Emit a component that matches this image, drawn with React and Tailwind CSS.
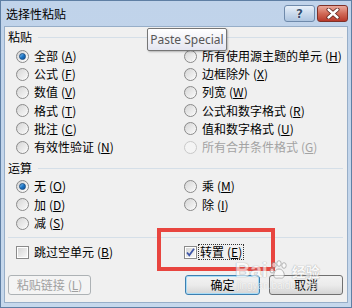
import React from "react";

function Radio({ checked, disabled }) {
  return (
    <div
      className={
        "w-[13px] h-[13px] shrink-0 rounded-full border flex items-center justify-center " +
        (disabled
          ? "border-[#c9c9c9] bg-[#f4f4f4]"
          : "border-[#8a8a8a] bg-linear-to-br from-[#cfcfcf] via-[#ececec] to-[#ffffff]")
      }
    >
      {checked ? (
        <div className="w-[7px] h-[7px] rounded-full bg-linear-to-br from-[#7ec3f2] via-[#1f78c8] to-[#0b4d95] border border-[#1a4f86]" />
      ) : (
        <div
          className={
            "w-[9px] h-[9px] rounded-full " +
            (disabled ? "bg-[#f4f4f4]" : "bg-linear-to-br from-[#d9d9d9] to-[#f7f7f7]")
          }
        />
      )}
    </div>
  );
}

function Check({ checked }) {
  return (
    <div className="w-[13px] h-[13px] shrink-0 border border-[#8a8a8a] bg-white p-[1px]">
      <div className="w-full h-full bg-linear-to-br from-[#d6d6d6] to-[#f8f8f8] relative">
        {checked && (
          <svg width="11" height="11" viewBox="0 0 11 11" className="absolute -left-[1px] -top-[1px]">
            <path d="M2 5.5 L4.3 8.3 L9 1.8" fill="none" stroke="#3f56a8" strokeWidth="1.8" />
          </svg>
        )}
      </div>
    </div>
  );
}

function Acc({ c }) {
  return (
    <span className="ml-[3px]">
      (<span className="underline">{c}</span>)
    </span>
  );
}

function Opt({ label, acc, checked, disabled, h = "h-[18.2px]" }) {
  return (
    <div className={"flex items-center " + h}>
      <Radio checked={checked} disabled={disabled} />
      <span className={"ml-[5px] whitespace-nowrap " + (disabled ? "text-[#a3a3a3]" : "text-black")}>
        {label}
        <Acc c={acc} />
      </span>
    </div>
  );
}

function Header({ label, className = "" }) {
  return (
    <div className={"flex items-center h-[18px] pl-[3px] pr-[4px] " + className}>
      <span className="whitespace-nowrap">{label}</span>
      <div className="flex-1 ml-[6px] h-px bg-[#d5dfe8]" />
    </div>
  );
}

export default function App() {
  return (
    <div className="w-[352px] h-[308px] bg-white">
      <div className="relative w-[352px] h-[308px] flex flex-col border border-[#5f7fa4] bg-linear-to-b from-[#c0d3ea] to-[#c6d8ec] font-['Noto_Sans_CJK_SC',sans-serif] text-[12px] leading-[18px]">
        {/* title bar */}
        <div className="h-[25px] flex items-center pl-[5px] pr-[3px] shrink-0">
          <span className="text-black text-[12px]">选择性粘贴</span>
          <div className="flex-1" />
          <div className="flex gap-[2px] items-start h-[25px] pt-[4px]">
            <div className="w-[31px] h-[17px] rounded-[3px] border border-[#6f8aab] bg-linear-to-b from-[#e9f1fa] via-[#c9d9ec] to-[#aec5e0] flex items-center justify-center">
              <span className="font-['DejaVu_Sans',sans-serif] font-bold text-[12px] leading-none text-[#34506f] [text-shadow:0_0_1px_#fff,0_0_1px_#fff]">?</span>
            </div>
            <div className="w-[31px] h-[17px] rounded-[3px] border border-[#7f3128] bg-linear-to-b from-[#e9a99c] via-[#d16a57] to-[#b8382a] flex items-center justify-center">
              <svg width="14" height="11" viewBox="0 0 14 11">
                <path d="M2.5 1.5 L11.5 9.5 M11.5 1.5 L2.5 9.5" stroke="#5a1e18" strokeWidth="4" strokeLinecap="round" />
                <path d="M2.5 1.5 L11.5 9.5 M11.5 1.5 L2.5 9.5" stroke="#ffffff" strokeWidth="2.4" strokeLinecap="round" />
              </svg>
            </div>
          </div>
        </div>

        {/* content */}
        <div className="flex-1 mx-[3px] mb-[4px] border border-[#97aec8] bg-[#f0f0f0] flex flex-col">
          <Header label="粘贴" className="mt-[1px]" />
          <div className="grid grid-cols-[168px_1fr] pl-[11px] mt-px">
            <div className="flex flex-col">
              <Opt label="全部" acc="A" checked />
              <Opt label="公式" acc="F" />
              <Opt label="数值" acc="V" />
              <Opt label="格式" acc="T" />
              <Opt label="批注" acc="C" />
              <Opt label="有效性验证" acc="N" />
            </div>
            <div className="flex flex-col">
              <Opt label="所有使用源主题的单元" acc="H" />
              <Opt label="边框除外" acc="X" />
              <Opt label="列宽" acc="W" />
              <Opt label="公式和数字格式" acc="R" />
              <Opt label="值和数字格式" acc="U" />
              <Opt label="所有合并条件格式" acc="G" disabled />
            </div>
          </div>

          <Header label="运算" className="mt-[3px]" />
          <div className="grid grid-cols-[168px_1fr] pl-[11px]">
            <div className="flex flex-col">
              <Opt label="无" acc="O" checked h="h-[18.4px]" />
              <Opt label="加" acc="D" h="h-[18.4px]" />
              <Opt label="减" acc="S" h="h-[18.4px]" />
            </div>
            <div className="flex flex-col">
              <Opt label="乘" acc="M" h="h-[18.4px]" />
              <Opt label="除" acc="I" h="h-[18.4px]" />
            </div>
          </div>

          <div className="mt-[5px] ml-[3px] mr-[4px] h-px bg-[#d5dfe8]" />

          <div className="grid grid-cols-[168px_1fr] pl-[11px] mt-[5px] h-[18px]">
            <div className="flex items-center">
              <Check />
              <span className="ml-[5px] whitespace-nowrap">
                跳过空单元
                <Acc c="B" />
              </span>
            </div>
            <div className="flex items-center">
              <Check checked />
              <span className="ml-[1px] whitespace-nowrap border border-dotted border-[#333] px-[1px] leading-[14px]">
                转置
                <Acc c="E" />
              </span>
            </div>
          </div>

          <div className="flex items-start mt-[14px] pl-[3px] pr-[4px]">
            <div className="w-[83px] h-[20px] rounded-[3px] border border-[#adb2b5] bg-[#f4f4f4] flex items-center justify-center text-[#a0a0a0]">
              粘贴链接
              <Acc c="L" />
            </div>
            <div className="flex-1" />
            <div className="w-[75px] h-[20px] rounded-[3px] border border-[#3c7fb1] bg-linear-to-b from-[#f2f2f2] via-[#ebebeb] to-[#d5d5d5] shadow-[inset_0_0_0_1px_#a9dcf6] flex items-center justify-center text-black">
              确定
            </div>
            <div className="w-[74px] h-[20px] ml-[9px] rounded-[3px] border border-[#707070] bg-linear-to-b from-[#f2f2f2] via-[#ebebeb] to-[#d5d5d5] flex items-center justify-center text-black">
              取消
            </div>
          </div>
        </div>

        {/* tooltip */}
        <div className="absolute left-[146px] top-[27px] w-[80px] h-[23px] rounded-[2px] border border-[#767676] bg-linear-to-b from-[#ffffff] to-[#e4e5f0] shadow-[1px_1px_2px_rgba(0,0,0,0.25)] flex items-center justify-center font-['Noto_Sans',sans-serif] text-[12px] text-[#575757]">
          Paste Special
        </div>

        {/* red highlight */}
        <div className="absolute left-[156px] top-[227px] w-[118px] h-[43px] border-[4px] border-[#e8453f]" />

        {/* watermark */}
        <div className="absolute left-[234px] top-[259px] flex flex-col items-center pointer-events-none opacity-60">
          <div className="flex items-end">
            <span className="font-['Liberation_Sans',sans-serif] font-bold text-[21px] leading-[20px] text-white [text-shadow:0_0_1px_#8a8a8a,0_0_1px_#8a8a8a]">Bai</span>
            <svg width="20" height="20" viewBox="0 0 20 20" className="mx-[1px]">
              <g fill="#ffffff" stroke="#8a8a8a" strokeWidth="1">
                <ellipse cx="5" cy="5" rx="2.2" ry="2.8" />
                <ellipse cx="10" cy="3.5" rx="2.2" ry="2.8" />
                <ellipse cx="15" cy="5.5" rx="2.2" ry="2.8" />
                <ellipse cx="3" cy="10.5" rx="2" ry="2.5" />
                <path d="M10 9 C6 9 4 14 5 16.5 C6 19 9 18 10 18 C11 18 14 19 15 16.5 C16 14 14 9 10 9 Z" />
              </g>
            </svg>
            <span className="ml-[2px] text-[14px] leading-[18px] text-white font-bold [text-shadow:0_0_1px_#8a8a8a,0_0_1px_#8a8a8a]">经验</span>
          </div>
          <span className="font-['Liberation_Sans',sans-serif] text-[10px] leading-[12px] text-white [text-shadow:0_0_1px_#999999]">jingyan.baidu.com</span>
        </div>
      </div>
    </div>
  );
}
